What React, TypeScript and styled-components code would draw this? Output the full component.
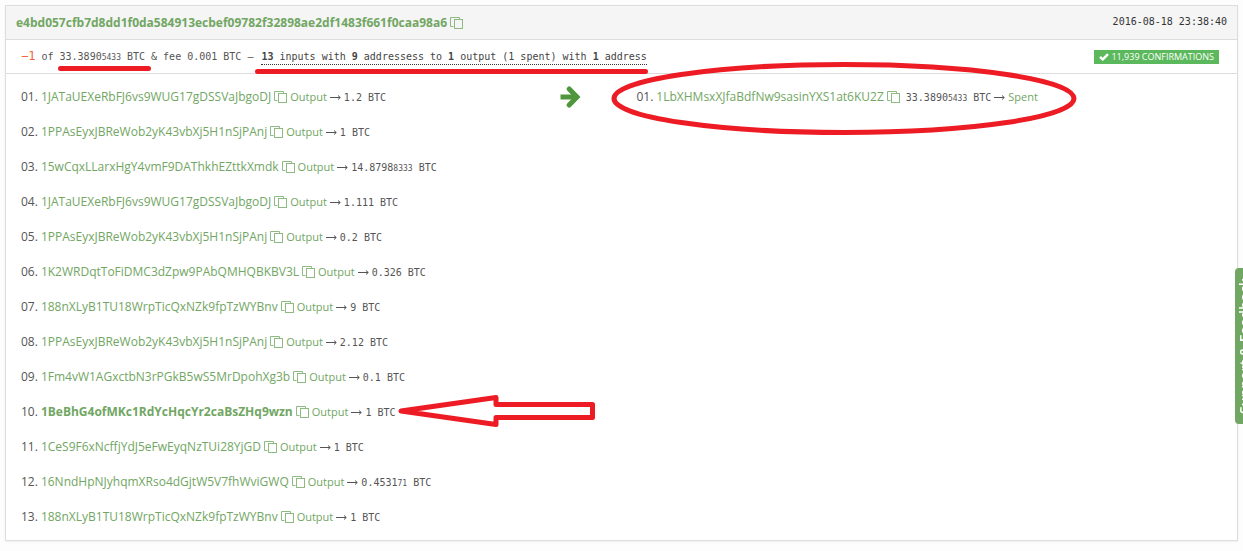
import React from 'react';
import styled, { createGlobalStyle } from 'styled-components';

const GlobalStyle = createGlobalStyle`
  *, *::before, *::after { box-sizing: border-box; }
  body {
    margin: 0;
    background: #fdfdfd;
    color: #555;
    font-family: 'Open Sans', 'Noto Sans', sans-serif;
    font-size: 12px;
    line-height: 20px;
  }
`;

const Page = styled.main`
  position: relative;
  padding: 5px 5px 10px;
`;

const Panel = styled.section`
  background: #fff;
  border: 1px solid #ddd;
  box-shadow: 0 1px 2px rgba(0, 0, 0, 0.06);
`;

const PanelHeader = styled.header`
  display: flex;
  justify-content: space-between;
  align-items: center;
  height: 34px;
  padding: 0 10px;
  background: #f5f5f5;
  border-bottom: 1px solid #ddd;
`;

const Summary = styled.div`
  display: flex;
  justify-content: space-between;
  align-items: center;
  height: 34px;
  padding: 0 18px 0 15px;
  border-bottom: 1px solid #ddd;
`;

const Mono = styled.span`
  font-family: 'DejaVu Sans Mono', monospace;
  font-size: 10px;
  white-space: pre;
`;

const AmountText = styled(Mono)`
  padding-top: 2px;
`;

const Timestamp = styled.time`
  font-family: 'DejaVu Sans Mono', monospace;
  font-size: 10px;
  color: #333;
  padding-bottom: 2px;
`;

const Small = styled.span`
  font-size: 8px;
`;

const Negative = styled.span`
  color: #f0643c;
  font-size: 12px;
`;

const Dotted = styled.span`
  margin-left: 2px;
  color: #444;
  padding-bottom: 2px;
  border-bottom: 1px dotted #333;
`;

const HashLink = styled.a<{ $bold?: boolean }>`
  color: #71a663;
  font-weight: ${(p) => (p.$bold ? 700 : 400)};
  text-decoration: none;
`;

const StateLink = styled(HashLink)`
  font-size: 11px;
`;

const Title = styled.h1`
  display: flex;
  align-items: center;
  gap: 3px;
  margin: 0;
  font-size: 12px;
`;

const CopyButton = styled.button<{ $spaced?: boolean }>`
  display: flex;
  padding: 0;
  margin-right: ${(p) => (p.$spaced ? 3 : 0)}px;
  border: 0;
  background: none;
  color: #8dba80;
  cursor: pointer;
`;

const Badge = styled.span`
  display: flex;
  align-items: center;
  gap: 2px;
  height: 14px;
  padding: 0 5px;
  background: #5cb85c;
  color: #fff;
  font-size: 9px;
  line-height: 14px;
`;

const Body = styled.div`
  display: grid;
  grid-template-columns: 45% 5% 50%;
  padding: 13px 0;
`;

const List = styled.ol`
  display: flex;
  flex-direction: column;
  gap: 15px;
  margin: 0;
  padding: 0 0 0 15px;
  list-style: none;
`;

const Item = styled.li`
  display: flex;
  align-items: center;
  gap: 3px;
  height: 20px;
  white-space: nowrap;
`;

const Direction = styled.div`
  display: flex;
  align-items: center;
  height: 20px;
`;

const FeedbackTab = styled.button`
  position: fixed;
  top: 268px;
  right: -12px;
  width: 20px;
  height: 156px;
  padding: 0;
  border: 0;
  border-radius: 0 4px 4px 0;
  background: #71a663;
  color: #fff;
  font: 600 14px/20px 'Open Sans', sans-serif;
  white-space: nowrap;
  writing-mode: vertical-rl;
  transform: rotate(180deg);
  cursor: pointer;
`;

const Markup = styled.svg`
  position: absolute;
  top: 0;
  left: 0;
  width: 100%;
  height: 100%;
  pointer-events: none;
  fill: none;
  stroke: #ed1c24;
  stroke-width: 5;
  stroke-linecap: round;
  stroke-linejoin: round;
`;

const CopyIcon = () => (
  <svg width="13" height="12" viewBox="0 0 13 12" fill="none" stroke="currentColor">
    <path d="M3.5 9.5H0.5V0.5H9.5V2" />
    <rect x="4.5" y="2.5" width="8" height="9" />
  </svg>
);

const LongArrow = () => (
  <svg width="11" height="7" viewBox="0 0 11 7" fill="none" stroke="#555" aria-hidden="true">
    <path d="M0 3.5H10" />
    <path d="M8 1.5L10.3 3.5L8 5.5" />
  </svg>
);

const Copy = ({ spaced }: { spaced?: boolean }) => (
  <CopyButton type="button" aria-label="Copy" $spaced={spaced}>
    <CopyIcon />
  </CopyButton>
);

type Amount = { value: string; rest?: string };

const Btc = ({ value, rest }: Amount) => (
  <AmountText>
    {value}
    {rest && <Small>{rest}</Small>} BTC
  </AmountText>
);

type Input = Amount & { address: string; current?: boolean };

const inputs: Input[] = [
  { address: '1JATaUEXeRbFJ6vs9WUG17gDSSVaJbgoDJ', value: '1.2' },
  { address: '1PPAsEyxJBReWob2yK43vbXj5H1nSjPAnj', value: '1' },
  { address: '15wCqxLLarxHgY4vmF9DAThkhEZttkXmdk', value: '14.8798', rest: '8333' },
  { address: '1JATaUEXeRbFJ6vs9WUG17gDSSVaJbgoDJ', value: '1.111' },
  { address: '1PPAsEyxJBReWob2yK43vbXj5H1nSjPAnj', value: '0.2' },
  { address: '1K2WRDqtToFiDMC3dZpw9PAbQMHQBKBV3L', value: '0.326' },
  { address: '188nXLyB1TU18WrpTicQxNZk9fpTzWYBnv', value: '9' },
  { address: '1PPAsEyxJBReWob2yK43vbXj5H1nSjPAnj', value: '2.12' },
  { address: '1Fm4vW1AGxctbN3rPGkB5wS5MrDpohXg3b', value: '0.1' },
  { address: '1BeBhG4ofMKc1RdYcHqcYr2caBsZHq9wzn', value: '1', current: true },
  { address: '1CeS9F6xNcffjYdJ5eFwEyqNzTUi28YjGD', value: '1' },
  { address: '16NndHpNJyhqmXRso4dGjtW5V7fhWviGWQ', value: '0.4531', rest: '71' },
  { address: '188nXLyB1TU18WrpTicQxNZk9fpTzWYBnv', value: '1' },
];

export default function App() {
  return (
    <Page>
      <GlobalStyle />
      <Panel>
        <PanelHeader>
          <Title>
            <HashLink href="#tx" $bold>
              e4bd057cfb7d8dd1f0da584913ecbef09782f32898ae2df1483f661f0caa98a6
            </HashLink>
            <Copy />
          </Title>
          <Timestamp>2016-08-18 23:38:40</Timestamp>
        </PanelHeader>
        <Summary>
          <Mono>
            <Negative>−1</Negative> of 33.3890<Small>5433</Small> BTC &amp; fee 0.001 BTC –{' '}
            <Dotted>
              <b>13</b> inputs with <b>9</b> addressess to <b>1</b> output (1 spent) with <b>1</b> address
            </Dotted>
          </Mono>
          <Badge>
            <svg width="10" height="8" viewBox="0 0 10 8" fill="none" stroke="#fff" strokeWidth="2.4">
              <path d="M1 3.8L3.8 6.4L9 1.2" />
            </svg>
            11,939 CONFIRMATIONS
          </Badge>
        </Summary>
        <Body>
          <List>
            {inputs.map((input, i) => (
              <Item key={i}>
                <span>{String(i + 1).padStart(2, '0')}.</span>
                <HashLink href="#address" $bold={input.current}>
                  {input.address}
                </HashLink>
                <Copy />
                <StateLink href="#output">Output</StateLink>
                <LongArrow />
                <Btc value={input.value} rest={input.rest} />
              </Item>
            ))}
          </List>
          <Direction>
            <svg width="21" height="22" viewBox="0 0 21 22" fill="none" stroke="#4f963c" strokeWidth="5">
              <path d="M0.5 11H16" />
              <path d="M9.2 3L17 11L9.2 19" strokeLinecap="round" />
            </svg>
          </Direction>
          <List>
            <Item>
              <span>01.</span>
              <HashLink href="#address">1LbXHMsxXJfaBdfNw9sasinYXS1at6KU2Z</HashLink>
              <Copy spaced />
              <Btc value="33.3890" rest="5433" />
              <LongArrow />
              <StateLink href="#spent">Spent</StateLink>
            </Item>
          </List>
        </Body>
      </Panel>
      <Markup aria-hidden="true">
        <path d="M60.5 68.5H148.5M257.5 71.5H645.5" />
        <ellipse cx="844" cy="98.5" rx="230" ry="34" />
        <path d="M401 411L496 397.5V404.5H592.5V417.5H496V424.5Z" />
      </Markup>
      <FeedbackTab type="button">Support &amp; Feedback</FeedbackTab>
    </Page>
  );
}
